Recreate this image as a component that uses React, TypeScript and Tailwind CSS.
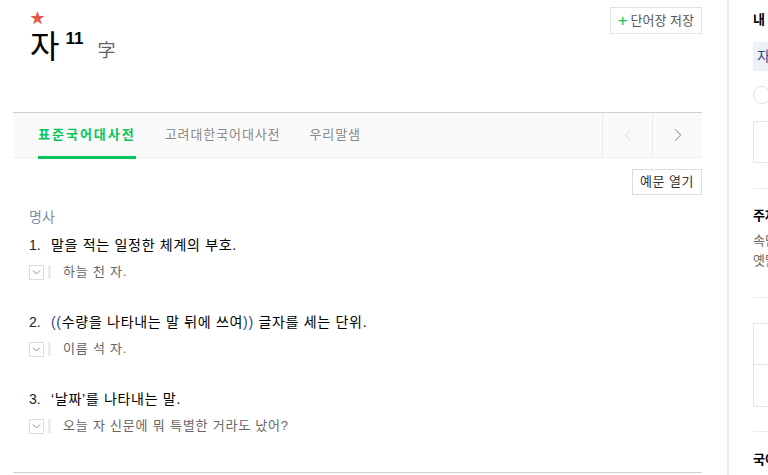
import { ChevronLeft, ChevronRight } from 'lucide-react'

const font = { fontFamily: '"Liberation Sans", "Noto Sans CJK KR", sans-serif' }

const senses = [
  { no: '1.', text: <>말을 적는 일정한 체계의 부호.</>, example: '하늘 천 자.' },
  {
    no: '2.',
    text: (
      <>
        <span className="text-[#2b4a8b]">((</span>수량을 나타내는 말 뒤에 쓰여
        <span className="text-[#2b4a8b]">))</span> 글자를 세는 단위.
      </>
    ),
    example: '이름 석 자.',
  },
  { no: '3.', text: <>‘날짜’를 나타내는 말.</>, example: '오늘 자 신문에 뭐 특별한 거라도 났어?' },
]

const ExampleToggle = () => (
  <span className="flex h-[15px] w-[15px] items-center justify-center border border-[#dcdcdc] bg-white">
    <svg width="9" height="5" viewBox="0 0 9 5" fill="none">
      <path d="M1 0.5 L4.5 4 L8 0.5" stroke="#8a8a8a" strokeWidth="1" />
    </svg>
  </span>
)

const App = () => {
  return (
    <div className="flex h-[475px] w-[768px] overflow-hidden bg-white text-[#111]" style={font}>
      {/* main column */}
      <div className="w-[727px] shrink-0 pl-[13px] pr-[25px]">
        <div className="flex h-[112px] items-start justify-between">
          <div className="pl-[17px] pt-[10px]">
            <div className="text-[15px] leading-none text-[#e35a4a]">★</div>
            <div className="mt-[4px] flex items-start">
              <span className="text-[32px] leading-[36px] text-black">자</span>
              <span className="ml-[6px] mt-[1px] text-[17px] font-bold leading-none text-black">11</span>
              <span className="ml-[14px] mt-[11px] text-[18px] leading-[22px] text-[#666]">字</span>
            </div>
          </div>
          <button className="mt-[7px] flex h-[27px] items-center gap-[3px] border border-[#e3e3e3] bg-white px-[7px] text-[13px] text-[#555]">
            <span className="text-[17px] leading-none text-[#03c75a]">+</span>
            <span>단어장 저장</span>
          </button>
        </div>

        {/* tabs */}
        <div className="flex h-[46px] items-stretch border-t border-b border-t-[#cfcfcf] border-b-[#ededed] bg-[#fafafa]">
          <div className="flex flex-1 items-stretch gap-[29px] pl-[25px] text-[13px]">
            <div className="relative flex items-center font-bold tracking-[2px] text-[#03c75a]">
              표준국어대사전
              <span className="absolute bottom-[-2px] left-0 right-0 h-[3px] bg-[#03c75a]" />
            </div>
            <div className="flex items-center tracking-[0.9px] text-[#888]">고려대한국어대사전</div>
            <div className="flex items-center tracking-[0.9px] text-[#888]">우리말샘</div>
          </div>
          <div className="flex w-[50px] items-center justify-center border-l border-[#ececec]">
            <ChevronLeft size={22} strokeWidth={1} className="text-[#d6d6d6]" />
          </div>
          <div className="flex w-[50px] items-center justify-center border-l border-[#ececec]">
            <ChevronRight size={22} strokeWidth={1} className="text-[#777]" />
          </div>
        </div>

        <div className="mt-[11px] flex justify-end">
          <button className="flex h-[26px] items-center border border-[#dedede] bg-white px-[7px] text-[13px] tracking-[0.5px] text-[#333]">
            예문 열기
          </button>
        </div>

        <div className="pl-[16px]">
          <div className="mt-[13px] text-[14px] leading-[18px] text-[#7d8fa8]">명사</div>
          <ol className="mt-[10px]">
            {senses.map((s, i) => (
              <li key={s.no} className={i > 0 ? 'mt-[32px]' : ''}>
                <div className="flex text-[14px] leading-[18px] text-black">
                  <span className="w-[22px] shrink-0 text-[#222]">{s.no}</span>
                  <span className="tracking-[0.7px]">{s.text}</span>
                </div>
                <div className="mt-[9px] flex items-center">
                  <ExampleToggle />
                  <span className="ml-[4px] h-[14px] w-[3px] bg-[#ececec]" />
                  <span className="ml-[12px] text-[13px] leading-[18px] tracking-[0.8px] text-[#666]">{s.example}</span>
                </div>
              </li>
            ))}
          </ol>
          <div className="-ml-[16px] mt-[37px] border-t border-[#d0d0d0]" />
        </div>
      </div>

      {/* side panel */}
      <div className="w-[300px] shrink-0 whitespace-nowrap border-l-2 border-[#eaeaea] pl-[24px] text-[13px]">
        <div className="mt-[12px] font-bold leading-[16px] text-black">내 단어장</div>
        <div className="mt-[14px] h-[29px] bg-[#eef1f5] pl-[4px] text-[14px] leading-[29px] text-[#2b4a8b]">자</div>
        <div className="mt-[15px] h-[18px] w-[18px] rounded-full border border-[#e0e0e0]" />
        <div className="mt-[17px] h-[42px] border border-[#e5e5e5]" />
        <div className="mt-[25px] border-t border-[#ececec]" />
        <div className="mt-[19px] font-bold leading-[16px] text-black">주제별</div>
        <div className="mt-[7px] leading-[20px] text-[#666]">속담</div>
        <div className="leading-[20px] text-[#666]">옛말</div>
        <div className="mt-[26px] border-t border-[#ececec]" />
        <div className="mt-[25px] border border-[#e5e5e5]">
          <div className="h-[41px] border-b border-[#e5e5e5]" />
          <div className="h-[41px]" />
        </div>
        <div className="mt-[24px] border-t border-[#ececec]" />
        <div className="mt-[20px] font-bold leading-[16px] text-black">국어</div>
      </div>
    </div>
  )
}

export default App
